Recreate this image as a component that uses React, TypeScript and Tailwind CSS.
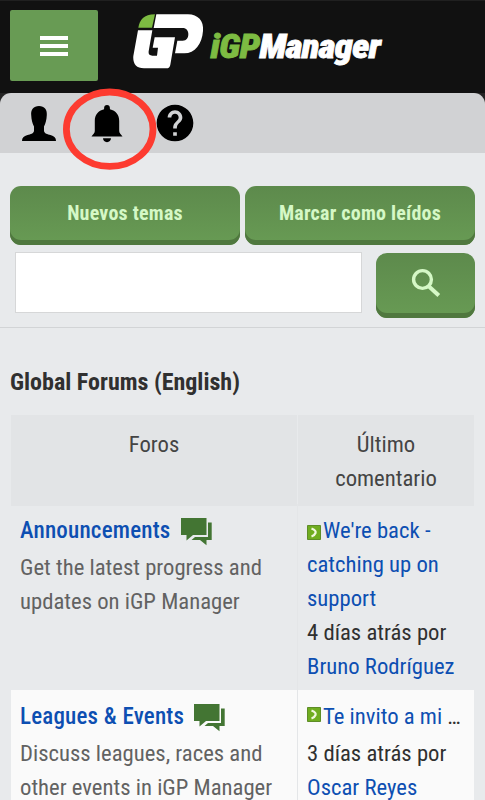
import type {ReactNode} from "react";
import {MdHelp} from "react-icons/md";

interface TextProps {
  children: ReactNode;
  className?: string;
}

const Text = ({children, className = ""}: TextProps) => (
  <span className={`inline-block whitespace-nowrap ${className}`}>{children}</span>
);

const Logo = () => (
  <svg width="252" height="60" viewBox="0 0 252 60" className="block">
    <g transform="scale(.33333)">
      <path d="M16 56C20 32 32 17 66 16l-9 40z" fill="#7dbb42" />
      <path
        d="M70 16h95c30 0 48 20 45 50-3 39-24 67-56 67h-28l7-38h16c12 0 17-8 17-20 0-10-6-18-17-18H62z"
        fill="#fff"
      />
      <path
        d="M15 64h43l-11 63c-1 9 2 13 11 13h14l3-24H59l6-31h61l-14 82c-1 7-5 11-12 11H33C9 178-1 163 1 141z"
        fill="#fff"
      />
    </g>
    <text
      x="77.500"
      y="48.5"
      textLength="170"
      lengthAdjust="spacingAndGlyphs"
      className="font-['Roboto_Condensed',Roboto,sans-serif] text-[34px] font-black italic tracking-[-0.5px]"
      fill="#fff"
    >
      <tspan fill="#7dbb42" stroke="#7dbb42" strokeWidth=".8">iGP</tspan>
      <tspan stroke="#fff" strokeWidth=".8">Manager</tspan>
    </text>
  </svg>
);

const UserIcon = () => (
  <svg width="34" height="35" viewBox="0 0 34 35">
    <path d="M17 0c5.500 0 8.200 3.500 7.800 9-.2 5-1.300 8.500-2.800 11.500v4.500c.3 2.500 3.500 3.200 6.500 4 3.800 1 5.500 2.800 5.500 6H0c0-3.200 1.700-5 5.500-6 3-.8 6.200-1.500 6.500-4v-4.500C10.500 17.500 9.400 14 9.200 9 8.800 3.500 11.500 0 17 0z" />
  </svg>
);

const BellIcon = () => (
  <svg width="32" height="38" viewBox="0 0 32 38">
    <path d="M16 0c1.800 0 2.900 1.300 2.900 3v1.200C25 5.500 28.200 10 28.200 16v10c0 2.500 1.800 3 3.300 5.500H.500C2 29 3.800 28.500 3.800 26V16c0-6 3.200-10.500 9.300-11.800V3c0-1.700 1.100-3 2.900-3zM12 33.300h8c0 2.200-1.700 3.900-4 3.900s-4-1.700-4-3.900z" />
  </svg>
);

const SearchIcon = () => (
  <svg width="30" height="30" viewBox="0 0 30 30" fill="none" stroke="currentColor">
    <circle cx="11.500" cy="11.500" r="8.900" strokeWidth="3.400" />
    <path d="M18 18.500l9.800 9" strokeWidth="4" />
  </svg>
);

const ChatIcon = () => (
  <svg width="31" height="28" viewBox="0 0 31 28" className="block">
    <path d="M0 0h25.500v17H12l-6.500 5.500V17H0zM27 4.500h3.700V22h-5.200v5.200L19 22h-8.500l3.500-3H27z" fill="#437533" />
  </svg>
);

const ArrowIcon = () => (
  <svg width="14" height="15" viewBox="0 0 14 15" className="block shrink-0">
    <path d="M.5.5h13v14H.5z" fill="#70ad20" stroke="#5e8d27" />
    <path d="M4.500 3.500q5 2 4 4.500-1 2.500-4 3.500" fill="none" stroke="#f2f7df" strokeWidth="2.200" />
  </svg>
);

const buttonClass =
  "flex items-center justify-center rounded-[11px] bg-linear-to-b from-[#5d8a4c] to-[#689b54] font-bold text-[#d5f8c6] shadow-[inset_0_-5px_0_#50783f]";

const Header = () => (
  <header className="flex h-[93px] items-start border-t border-[#202020] bg-[#111] pt-[9px] pl-2.5">
    <button type="button" className="flex h-[71px] w-[88px] flex-col items-center justify-center gap-1 rounded-[2px] bg-[#689b54]">
      <span className="h-[4px] w-7 bg-white" />
      <span className="h-[4px] w-7 bg-white" />
      <span className="h-[4px] w-7 bg-white" />
    </button>
    <div className="-mt-px ml-[35px]">
      <Logo />
    </div>
  </header>
);

const Toolbar = () => (
  <div className="bg-[#242424]">
    <nav className="relative flex h-[60px] items-start rounded-t-[11px] bg-[#d1d2d4] pl-[22px]">
      <div className="mt-[13px]">
        <UserIcon />
      </div>
      <div className="mt-3 ml-[35px]">
        <BellIcon />
      </div>
      <MdHelp className="mt-[8px] ml-[30px] size-11" />
      <svg width="96" height="84" className="absolute -top-1.5 left-[62px]">
        <ellipse cx="47.700" cy="42.200" rx="43.300" ry="37.200" fill="none" stroke="#fd3b30" strokeWidth="6.800" />
      </svg>
    </nav>
  </div>
);

interface ForumRowProps {
  title: string;
  description: string[];
  className: string;
  children: ReactNode;
}

const ForumRow = ({title, description, className, children}: ForumRowProps) => (
  <div className={`grid grid-cols-[287px_1fr] ${className}`}>
    <div className="-mt-2.5 border-r border-[#e4e6e8] pt-2.5 pl-[9px] text-[#626262]">
      <div className="flex h-[37px] items-start text-[23px] font-medium tracking-[0.2px] text-[#0d4fb2]">
        <Text>{title}</Text>
        <span className="mt-1 ml-2.5">
          <ChatIcon />
        </span>
      </div>
      {description.map(line => (
        <div key={line}>
          <Text>{line}</Text>
        </div>
      ))}
    </div>
    <div className="pl-[9px] text-[#0d4fb2]">{children}</div>
  </div>
);

export default function App() {
  return (
    <main className="h-[800px] w-[485px] overflow-hidden bg-[#e8eaec] font-['Roboto_Condensed',Roboto,sans-serif] text-[22.7px] leading-[34px] [font-stretch:75%]">
      <Header />
      <Toolbar />
      <section className="h-[175px] border-b border-[#d2d4d6] px-2.5 pt-[33px]">
        <div className="grid grid-cols-2 gap-[5px] text-[20px] tracking-[0.22px]">
          <button type="button" className={`h-[59px] pb-1.5 ${buttonClass}`}>
            <Text>Nuevos temas</Text>
          </button>
          <button type="button" className={`h-[59px] pb-1.5 ${buttonClass}`}>
            <Text>Marcar como leídos</Text>
          </button>
        </div>
        <div className="mt-[7px] flex justify-between pl-[5px]">
          <input className="h-[61px] w-[347px] border border-[#d6d7d8] bg-white outline-none" />
          <button type="button" className={`mt-px h-[65px] w-[99px] pb-1.5 ${buttonClass}`}>
            <SearchIcon />
          </button>
        </div>
      </section>
      <h1 className="mt-[37px] ml-2.5 text-[24px] font-bold text-[#303030]">
        <Text>Global Forums (English)</Text>
      </h1>
      <section className="mt-4 mr-[11px] ml-[11px]">
        <div className="grid h-[91px] grid-cols-[287px_1fr] bg-[#e2e4e6] pt-[13px] text-center text-[#444]">
          <div className="-mt-[13px] border-r border-[#e8eaec] pt-[13px]">
            <Text>Foros</Text>
          </div>
          <div>
            <Text>Último</Text>
            <br />
            <Text>comentario</Text>
          </div>
        </div>
        <ForumRow
          title="Announcements"
          description={["Get the latest progress and", "updates on iGP Manager"]}
          className="h-[184px] pt-2"
        >
          <div className="flex items-start">
            <span className="mt-[11px]">
              <ArrowIcon />
            </span>
            <Text className="ml-0.5">We're back -</Text>
          </div>
          <div><Text>catching up on</Text></div>
          <div><Text>support</Text></div>
          <div><Text className="text-[#303030]">4 días atrás por</Text></div>
          <div><Text>Bruno Rodríguez</Text></div>
        </ForumRow>
        <ForumRow
          title="Leagues & Events"
          description={["Discuss leagues, races and", "other events in iGP Manager"]}
          className="h-[120px] bg-[#fafafa] pt-2.5"
        >
          <div className="mb-[3px] flex items-start">
            <span className="mt-[7px]">
              <ArrowIcon />
            </span>
            <Text className="ml-0.5">Te invito a mi <span className="text-[#303030]">…</span></Text>
          </div>
          <div><Text className="text-[#303030]">3 días atrás por</Text></div>
          <div><Text>Oscar Reyes</Text></div>
        </ForumRow>
      </section>
    </main>
  );
}
